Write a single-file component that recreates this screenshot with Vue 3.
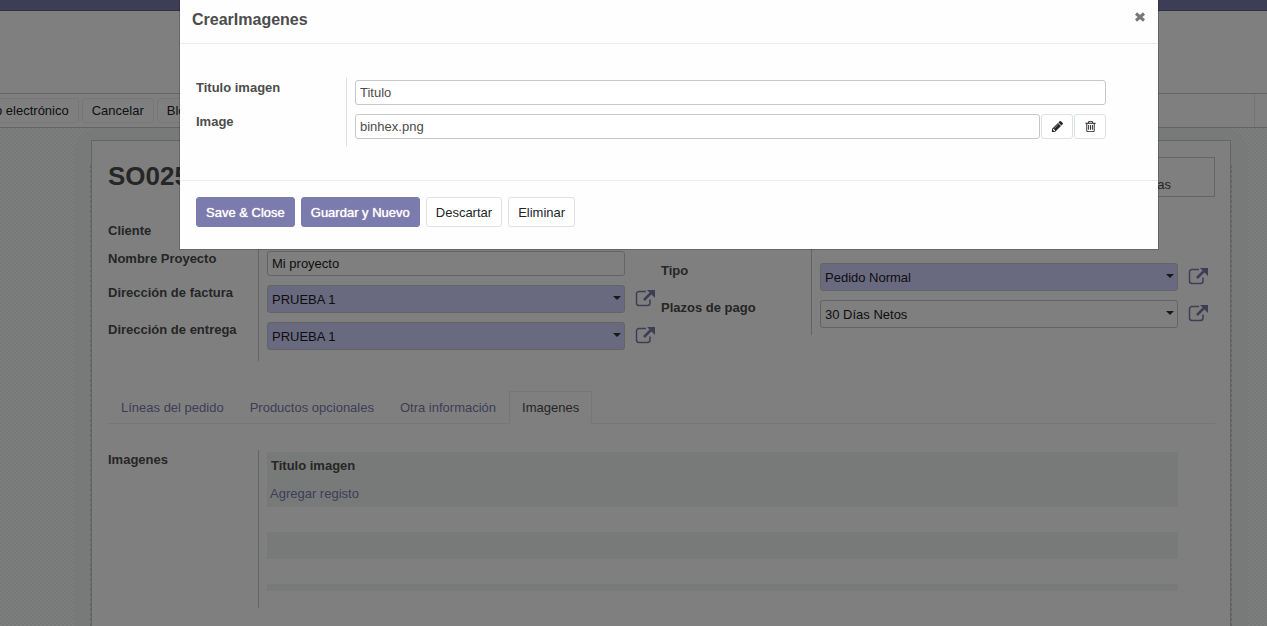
<script setup>
import { ref } from 'vue'

const tabs = ['Líneas del pedido', 'Productos opcionales', 'Otra información', 'Imagenes']
const activeTab = ref('Imagenes')
const project = ref('Mi proyecto')
const imageTitle = ref('Titulo')
const imageFile = ref('binhex.png')
const leftSelects = [
  { id: 'invoice', label: 'Dirección de factura', value: 'PRUEBA 1', required: true },
  { id: 'delivery', label: 'Dirección de entrega', value: 'PRUEBA 1', required: true }
]
const rightSelects = [
  { id: 'type', label: 'Tipo', value: 'Pedido Normal', required: true },
  { id: 'terms', label: 'Plazos de pago', value: '30 Días Netos', required: false }
]
const columns = [
  { name: 'left', selects: leftSelects },
  { name: 'right', selects: rightSelects }
]
</script>

<template>
  <div class="app">
    <header class="navbar"></header>
    <div class="control-panel"></div>
    <div class="statusbar">
      <button type="button" class="btn status-btn cut">o electrónico</button>
      <button type="button" class="btn status-btn">Cancelar</button>
      <button type="button" class="btn status-btn">Bloquear</button>
      <span class="status-end"></span>
    </div>

    <main class="form-view">
      <div class="halo">
        <section class="sheet">
          <div class="title-row">
            <h1>SO025</h1>
            <button type="button" class="stat">Facturas</button>
          </div>

          <div class="columns">
            <div v-for="col in columns" :key="col.name" class="group" :class="col.name">
              <template v-if="col.name === 'left'">
                <div class="row client">
                  <span class="label">Cliente</span>
                </div>
                <div class="row">
                  <label class="label" for="project">Nombre Proyecto</label>
                  <div class="field"><input id="project" v-model="project" class="text" type="text" /></div>
                </div>
              </template>
              <div v-else class="row spacer"><span class="label"></span></div>
              <div v-for="s in col.selects" :key="s.id" class="row">
                <label class="label" :for="s.id">{{ s.label }}</label>
                <div class="field">
                  <div class="select-box">
                    <select :id="s.id" :class="{ required: s.required }">
                      <option>{{ s.value }}</option>
                    </select>
                    <svg class="caret" viewBox="0 0 8 4"><path d="M0 0h8L4 4z" /></svg>
                  </div>
                </div>
                <button type="button" class="external" aria-label="Abrir">
                  <svg viewBox="0 0 20 18">
                    <path class="frame" d="M11 2.5H4A2.5 2.5 0 0 0 1.500 5v9A2.500 2.500 0 0 0 4 16.500h8.500A2.500 2.500 0 0 0 15 14v-3.500" />
                    <path class="shaft" d="M9 11l7-7" />
                    <path class="head" d="M12 1h8v8z" />
                  </svg>
                </button>
              </div>
            </div>
          </div>

          <nav class="tabs">
            <a v-for="t in tabs" :key="t" href="#" :class="{ active: t === activeTab }" @click.prevent="activeTab = t">{{ t }}</a>
          </nav>

          <div class="row images">
            <span class="label">Imagenes</span>
            <div class="field">
              <table>
                <thead><tr><th>Titulo imagen</th></tr></thead>
                <tbody>
                  <tr class="add"><td><a href="#" @click.prevent>Agregar registo</a></td></tr>
                  <tr class="blank"><td></td></tr>
                  <tr class="band"><td></td></tr>
                  <tr class="blank"><td></td></tr>
                  <tr class="foot"><td></td></tr>
                </tbody>
              </table>
            </div>
          </div>
        </section>
      </div>
    </main>

    <div class="backdrop">
      <div class="modal" role="dialog" aria-labelledby="dialog-title">
        <header class="modal-header">
          <h4 id="dialog-title">CrearImagenes</h4>
          <button type="button" class="close" aria-label="Cerrar">
            <svg viewBox="0 0 10 10"><path d="M1 1.500l8 7M9 1.500l-8 7" /></svg>
          </button>
        </header>
        <div class="modal-body">
          <div class="row first">
            <label class="label" for="image-title">Titulo imagen</label>
            <div class="field"><input id="image-title" v-model="imageTitle" class="text" type="text" /></div>
          </div>
          <div class="row last">
            <label class="label" for="image-file">Image</label>
            <div class="field file">
              <input id="image-file" v-model="imageFile" class="text" type="text" />
              <button type="button" class="btn icon-btn" aria-label="Editar">
                <svg viewBox="0 0 1792 1792"><path d="M491 1536l91-91-235-235-91 91v107h128v128h107zm523-928q0-22-22-22-10 0-17 7l-542 542q-7 7-7 17 0 22 22 22 10 0 17-7l542-542q7-7 7-17zm-54-192l416 416-832 832H128v-416zm683 96q0 53-37 90l-166 166-416-416 166-165q36-38 90-38 53 0 91 38l235 234q37 39 37 91z" /></svg>
              </button>
              <button type="button" class="btn icon-btn" aria-label="Borrar">
                <svg viewBox="0 0 1792 1792"><path d="M704 736v576q0 14-9 23t-23 9h-64q-14 0-23-9t-9-23V736q0-14 9-23t23-9h64q14 0 23 9t9 23zm256 0v576q0 14-9 23t-23 9h-64q-14 0-23-9t-9-23V736q0-14 9-23t23-9h64q14 0 23 9t9 23zm256 0v576q0 14-9 23t-23 9h-64q-14 0-23-9t-9-23V736q0-14 9-23t23-9h64q14 0 23 9t9 23zm128 724V512H448v948q0 22 7 40.500t14.500 27 10.500 8.500h832q3 0 10.500-8.500t14.500-27 7-40.500zM672 384h448l-48-117q-7-9-17-11H738q-10 2-17 11zm928 32v64q0 14-9 23t-23 9h-96v948q0 83-47 143.500t-113 60.500H480q-66 0-113-58.500T320 1464V512h-96q-14 0-23-9t-9-23v-64q0-14 9-23t23-9h309l70-167q15-37 54-63t79-26h320q40 0 79 26t54 63l70 167h309q14 0 23 9t9 23z" /></svg>
              </button>
            </div>
          </div>
        </div>
        <footer class="modal-footer">
          <button type="button" class="btn primary">Save &amp; Close</button>
          <button type="button" class="btn primary">Guardar y Nuevo</button>
          <button type="button" class="btn">Descartar</button>
          <button type="button" class="btn">Eliminar</button>
        </footer>
      </div>
    </div>
  </div>
</template>

<style>
body {
  overflow: hidden;
}
</style>

<style scoped>
.app,
.app * {
  box-sizing: border-box;
}
.app {
  display: flex;
  flex-direction: column;
  height: 100vh;
  overflow: hidden;
  background: #fff;
  color: #4c4c4c;
  font: 13px/18px "Liberation Sans", Arial, sans-serif;
}
button,
input,
select {
  margin: 0;
  font: inherit;
}
h1,
h4 {
  margin: 0;
}
svg {
  display: block;
}
a {
  color: #7c7bad;
  text-decoration: none;
}

.navbar {
  flex: none;
  height: 11px;
  background: #7c7bad;
  border-bottom: 1px solid #5f5e97;
}
.control-panel {
  flex: none;
  height: 82px;
}
.statusbar {
  flex: none;
  display: flex;
  align-items: center;
  gap: 3px;
  height: 35px;
  border-top: 1px solid #c8c8c8;
  border-bottom: 1px solid #c8c8c8;
}
.btn {
  height: 30px;
  padding: 2px 9px 0;
  border: 1px solid #dee2e6;
  border-radius: 3px;
  background: #fff;
  color: #212529;
  white-space: nowrap;
}
.status-btn {
  height: 25px;
  padding-top: 0;
  border-color: #efeff1;
}
.status-btn.cut {
  margin-left: -5px;
  padding-left: 0;
  border-left: 0;
}
.status-end {
  align-self: stretch;
  width: 13px;
  margin-left: auto;
  border-left: 1px solid #ececec;
}

.form-view {
  flex: 1;
  min-height: 0;
  overflow: hidden;
  display: flex;
  padding: 0 19px 0 74px;
  background: repeating-conic-gradient(#eef1f0 0 25%, #fafafa 0 50%) 0 0 / 4px 4px;
}
.halo {
  flex: 1;
  padding: 12px 17px 0;
  border-radius: 26px 26px 0 0;
  background: #eff5f3;
}
.sheet {
  position: relative;
  height: 100%;
  padding: 16px 15px 0 16px;
  border: 1px solid #c8c8c8;
  border-bottom: 0;
  background: #fff;
}
.sheet::before {
  content: "";
  position: absolute;
  inset: 24px -2px 0;
  border: 1px dashed #c8c8c8;
  border-width: 0 1px;
}
.title-row {
  display: flex;
  justify-content: space-between;
  height: 61px;
}
h1 {
  font-size: 26px;
  line-height: 38px;
}
.stat {
  width: 132px;
  height: 40px;
  padding: 15px 43px 0 0;
  border: 1px solid #c8c8c8;
  background: #fff;
  color: #4c4c4c;
  text-align: right;
}

.columns {
  display: grid;
  grid-template-columns: 1fr 1fr;
  align-items: start;
  margin-right: 1px;
}
.row {
  display: flex;
}
.label {
  flex: none;
  width: 151px;
  padding-top: 4px;
  border-right: 1px solid #c8c8c8;
  font-weight: bold;
}
.field {
  flex: 1;
  min-width: 0;
  padding: 5px 0 4px 8px;
  margin-right: 36px;
}
.row:has(.external) .field {
  margin-right: 0;
}
.client {
  height: 28px;
}
.spacer {
  height: 40px;
}
.left .row:last-child .label {
  margin-bottom: -7px;
}
.right .row:last-child .label {
  margin-bottom: -3px;
}
.text {
  display: block;
  width: 100%;
  height: 25px;
  padding: 0 4px;
  border: 1px solid #c8c8c8;
  border-radius: 3px;
  background: #fff;
  color: #4c4c4c;
}
.sheet .text {
  color: #1c1c1c;
}
.select-box {
  position: relative;
}
select {
  display: block;
  width: 100%;
  height: 28px;
  padding: 2px 16px 0 4px;
  border: 1px solid #c8c8c8;
  border-radius: 3px;
  background: #fff;
  color: #1c1c1c;
  appearance: none;
}
select.required {
  background: #d2d2ff;
}
.caret {
  position: absolute;
  top: 11px;
  right: 4px;
  width: 8px;
  height: 4px;
  fill: #333;
}
.external {
  flex: none;
  width: 36px;
  height: 28px;
  padding: 7px 6px 0 10px;
  border: 0;
  background: none;
}
.external svg {
  width: 20px;
  height: 18px;
}
.frame {
  fill: none;
  stroke: #7c7bad;
  stroke-width: 1.5;
}
.shaft {
  fill: none;
  stroke: #7c7bad;
  stroke-width: 2.5;
}
.head {
  fill: #7c7bad;
}

.tabs {
  display: flex;
  height: 33px;
  margin-top: 37px;
  border-bottom: 1px solid #efefef;
}
.tabs a {
  height: 33px;
  padding: 7px 12px;
  border: 1px solid transparent;
  white-space: nowrap;
}
.tabs a.active {
  border-color: #efefef;
  border-bottom-color: #fff;
  color: #4c4c4c;
}
.images {
  height: 158px;
  margin: 26px 1px 0 0;
}
.images .label {
  padding-top: 1px;
}
.images .field {
  padding-top: 2px;
}
table {
  width: 100%;
  border-collapse: collapse;
}
th,
td {
  padding: 0;
  text-align: left;
}
th {
  height: 27px;
  padding-left: 4px;
  background: #eff5f3;
}
.add td {
  height: 28px;
  padding: 2px 0 0 3px;
  background: #eff5f3;
}
.blank td {
  height: 25px;
}
.band td {
  height: 27px;
  background: #eff5f3;
}
.foot td {
  height: 7px;
  background: #eff5f3;
}

.backdrop {
  position: fixed;
  inset: 0;
  padding: 0 108px 0 179px;
  background: rgba(0, 0, 0, 0.5);
}
.modal {
  border: 1px solid rgba(0, 0, 0, 0.2);
  border-top: 0;
  background: #fefefe;
  background-clip: padding-box;
}
.modal-header {
  display: flex;
  justify-content: space-between;
  align-items: flex-start;
  height: 44px;
  padding: 10px 12px 0;
  border-bottom: 1px solid #e9ecef;
}
h4 {
  font-size: 16px;
  line-height: 19px;
}
.close {
  padding: 2px 1px;
  border: 0;
  background: none;
}
.close svg {
  width: 10px;
  height: 10px;
  fill: none;
  stroke: #777;
  stroke-width: 3;
}
.modal-body {
  height: 136px;
  padding: 34px 16px 0;
}
.modal .label {
  border-color: #ddd;
}
.modal .field {
  margin-right: 36px;
}
.modal .first .label {
  padding-top: 1px;
}
.modal .first .field {
  padding-top: 2px;
}
.modal .last .label {
  margin-bottom: -3px;
}
.file {
  display: flex;
  gap: 1px;
}
.file .text {
  flex: 1;
  min-width: 0;
}
.icon-btn {
  display: flex;
  align-items: center;
  justify-content: center;
  width: 32px;
  height: 25px;
  padding: 0;
}
.icon-btn svg {
  width: 13px;
  height: 13px;
  fill: #212529;
}
.modal-footer {
  display: flex;
  gap: 6px;
  padding: 16px 16px 22px;
  border-top: 1px solid #e9ecef;
}
.primary {
  border-color: #7c7bad;
  background: #7c7bad;
  color: #fff;
  text-shadow: 0 0 1px #fff;
}
</style>
